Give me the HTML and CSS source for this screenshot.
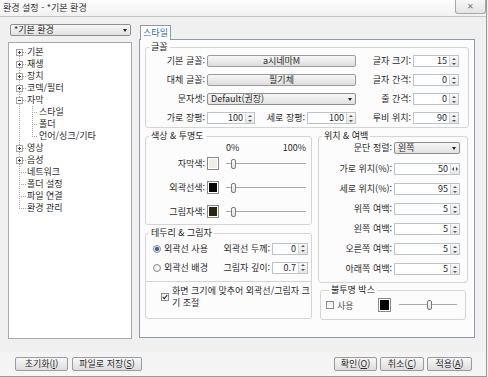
FILE: index.html
```html
<!DOCTYPE html>
<html lang="ko">

<head>
    <meta charset="UTF-8">
    <meta name="viewport" content="width=device-width, initial-scale=1.0">
    <link rel="stylesheet" href="styles.css">
    <title>환경 설정</title>
</head>

<body>
    <div class="window">
        <div class="titlebar">
            <span class="title">환경 설정 - *기본 환경</span>
            <span class="close">✕</span>
        </div>

        <div class="main">
            <div class="sidebar">
                <div class="combo preset">*기본 환경</div>
                <ul class="tree">
                    <li class="node first"><span class="exp plus"></span>기본</li>
                    <li class="node"><span class="exp plus"></span>재생</li>
                    <li class="node"><span class="exp plus"></span>장치</li>
                    <li class="node"><span class="exp plus"></span>코덱/필터</li>
                    <li class="node"><span class="exp minus"></span>자막</li>
                    <li class="node child">스타일</li>
                    <li class="node child">폴더</li>
                    <li class="node child last">언어/싱크/기타</li>
                    <li class="node"><span class="exp plus"></span>영상</li>
                    <li class="node"><span class="exp plus"></span>음성</li>
                    <li class="node">네트워크</li>
                    <li class="node">폴더 설정</li>
                    <li class="node">파일 연결</li>
                    <li class="node last">환경 관리</li>
                </ul>
            </div>

            <div class="tabs">
                <div class="tabbar">
                    <span class="tab">스타일</span>
                </div>
                <div class="panel">
                    <fieldset class="group">
                        <legend>글꼴</legend>
                        <div class="font-grid">
                            <span class="lbl">기본 글꼴:</span>
                            <span class="btn">a시네마M</span>
                            <span class="lbl">글자 크기:</span>
                            <span class="spin"><span class="val">15</span><span class="arrows"><span class="up"></span><span class="down"></span></span></span>

                            <span class="lbl">대체 글꼴:</span>
                            <span class="btn">필기체</span>
                            <span class="lbl">글자 간격:</span>
                            <span class="spin"><span class="val">0</span><span class="arrows"><span class="up"></span><span class="down"></span></span></span>

                            <span class="lbl">문자셋:</span>
                            <span class="combo">Default(권장)</span>
                            <span class="lbl">줄 간격:</span>
                            <span class="spin"><span class="val">0</span><span class="arrows"><span class="up"></span><span class="down"></span></span></span>

                            <span class="lbl">가로 장평:</span>
                            <span class="ratio">
                                <span class="spin w48"><span class="val">100</span><span class="arrows"><span class="up"></span><span class="down"></span></span></span>
                                <span class="lbl grow">세로 장평:</span>
                                <span class="spin w49"><span class="val">100</span><span class="arrows"><span class="up"></span><span class="down"></span></span></span>
                            </span>
                            <span class="lbl">루비 위치:</span>
                            <span class="spin"><span class="val">90</span><span class="arrows"><span class="up"></span><span class="down"></span></span></span>
                        </div>
                    </fieldset>

                    <div class="cols">
                        <div class="col left">
                            <fieldset class="group color">
                                <legend>색상 &amp; 투명도</legend>
                                <div class="scale"><span>0%</span><span>100%</span></div>
                                <div class="color-grid">
                                    <span class="lbl">자막색:</span>
                                    <span class="swatch" style="background:#efede6"></span>
                                    <span class="slider"><span class="thumb"></span></span>

                                    <span class="lbl">외곽선색:</span>
                                    <span class="swatch" style="background:#050505"></span>
                                    <span class="slider"><span class="thumb"></span></span>

                                    <span class="lbl">그림자색:</span>
                                    <span class="swatch" style="background:#2b2613"></span>
                                    <span class="slider"><span class="thumb"></span></span>
                                </div>
                            </fieldset>

                            <fieldset class="group outline">
                                <legend>테두리 &amp; 그림자</legend>
                                <div class="outline-grid">
                                    <span class="opt"><span class="radio on"></span>외곽선 사용</span>
                                    <span class="lbl">외곽선 두께:</span>
                                    <span class="spin"><span class="val">0</span><span class="arrows"><span class="up"></span><span class="down"></span></span></span>

                                    <span class="opt"><span class="radio"></span>외곽선 배경</span>
                                    <span class="lbl">그림자 깊이:</span>
                                    <span class="spin"><span class="val">0.7</span><span class="arrows"><span class="up"></span><span class="down"></span></span></span>
                                </div>
                                <div class="sep"></div>
                                <div class="fit">
                                    <span class="check on">
                                        <svg viewBox="0 0 6 6" width="6" height="6"><path d="M0.8 3 L2.4 4.6 L5.2 1.2" fill="none" stroke="#2b2b2b" stroke-width="1.1"/></svg>
                                    </span>
                                    <span>화면 크기에 맞추어 외곽선/그림자 크<br>기 조절</span>
                                </div>
                            </fieldset>
                        </div>

                        <div class="col right">
                            <fieldset class="group pos">
                                <legend>위치 &amp; 여백</legend>
                                <div class="pos-grid">
                                    <span class="lbl">문단 정렬:</span>
                                    <span class="combo">왼쪽</span>

                                    <span class="lbl">가로 위치(%):</span>
                                    <span class="spin"><span class="val">50</span><span class="arrows h"><span class="left"></span><span class="right"></span></span></span>

                                    <span class="lbl">세로 위치(%):</span>
                                    <span class="spin"><span class="val">95</span><span class="arrows"><span class="up"></span><span class="down"></span></span></span>

                                    <span class="lbl">위쪽 여백:</span>
                                    <span class="spin"><span class="val">5</span><span class="arrows"><span class="up"></span><span class="down"></span></span></span>

                                    <span class="lbl">왼쪽 여백:</span>
                                    <span class="spin"><span class="val">5</span><span class="arrows"><span class="up"></span><span class="down"></span></span></span>

                                    <span class="lbl">오른쪽 여백:</span>
                                    <span class="spin"><span class="val">5</span><span class="arrows"><span class="up"></span><span class="down"></span></span></span>

                                    <span class="lbl">아래쪽 여백:</span>
                                    <span class="spin"><span class="val">5</span><span class="arrows"><span class="up"></span><span class="down"></span></span></span>
                                </div>
                            </fieldset>

                            <fieldset class="group box">
                                <legend>불투명 박스</legend>
                                <div class="box-row">
                                    <span class="use"><span class="check"></span>사용</span>
                                    <span class="swatch big" style="background:#050505"></span>
                                    <span class="slider short"><span class="thumb mid"></span></span>
                                </div>
                            </fieldset>
                        </div>
                    </div>
                </div>
            </div>
        </div>

        <div class="footer">
            <span class="btn w53">초기화(<u>I</u>)</span>
            <span class="btn w70">파일로 저장(<u>S</u>)</span>
            <span class="btn w43 push">확인(<u>O</u>)</span>
            <span class="btn w44">취소(<u>C</u>)</span>
            <span class="btn w45">적용(<u>A</u>)</span>
        </div>
    </div>
</body>

</html>
```

FILE: styles.css
```css
* {
    margin: 0;
    padding: 0;
    box-sizing: border-box;
}

html,
body {
    width: 488px;
    height: 377px;
    overflow: hidden;
}

body {
    background: #f0f0f0;
    font-family: "Noto Sans CJK KR", "Noto Sans", sans-serif;
    font-size: 9px;
    color: #2a2a2a;
}

ul {
    list-style: none;
}

.window {
    width: 487px;
    height: 377px;
    border-right: 1px solid #9a9a9a;
    border-bottom: 1px solid #9a9a9a;
    display: flex;
    flex-direction: column;
}

/* title bar */
.titlebar {
    height: 17px;
    flex-shrink: 0;
    padding-left: 3px;
    border-bottom: 1px solid #c4c4c4;
    background: linear-gradient(to bottom, #fcfcfc, #f1f1f1);
    display: flex;
    justify-content: space-between;
    align-items: flex-start;
}

.title {
    line-height: 16px;
    color: #333;
}

.close {
    width: 31px;
    height: 14px;
    border: 1px solid #a8a8a8;
    border-top: none;
    border-radius: 0 0 3px 3px;
    background: linear-gradient(to bottom, #f7f7f7, #e4e4e4);
    color: #777;
    font-size: 8px;
    line-height: 12px;
    text-align: center;
}

/* main area */
.main {
    height: 322px;
    flex-shrink: 0;
    padding: 7px 0 0 8px;
    display: flex;
}

.sidebar {
    width: 124px;
    display: flex;
    flex-direction: column;
    gap: 6px;
}

.combo {
    height: 12px;
    padding-left: 3px;
    border: 1px solid #8e8e8e;
    border-radius: 2px;
    background: linear-gradient(to bottom, #f6f6f6, #e2e2e2);
    display: flex;
    align-items: center;
    line-height: 10px;
    white-space: nowrap;
}

.combo::after {
    content: "";
    margin-left: auto;
    margin-right: 3px;
    border-left: 2.5px solid transparent;
    border-right: 2.5px solid transparent;
    border-top: 3px solid #222;
}

.combo.preset {
    margin: 0 1px 0 2px;
}

/* tree */
.tree {
    flex: 1;
    padding-top: 3px;
    border: 1px solid #a9a9a9;
    background: #fff;
}

.node {
    height: 12px;
    line-height: 12px;
    padding-left: 18px;
    display: flex;
    align-items: center;
    white-space: nowrap;
    background-image:
        repeating-linear-gradient(to bottom, #a4a4a4 0 1px, transparent 1px 2px),
        repeating-linear-gradient(to right, #a4a4a4 0 1px, transparent 1px 2px);
    background-repeat: no-repeat;
    background-position: 10px 0, 10px 6px;
    background-size: 1px 12px, 7px 1px;
}

.node.first {
    background-position: 10px 6px, 10px 6px;
    background-size: 1px 6px, 7px 1px;
}

.node.last {
    background-size: 1px 7px, 7px 1px;
}

.node.child {
    padding-left: 30px;
    background-image:
        repeating-linear-gradient(to bottom, #a4a4a4 0 1px, transparent 1px 2px),
        repeating-linear-gradient(to bottom, #a4a4a4 0 1px, transparent 1px 2px),
        repeating-linear-gradient(to right, #a4a4a4 0 1px, transparent 1px 2px);
    background-position: 10px 0, 23px 0, 23px 6px;
    background-size: 1px 12px, 1px 12px, 6px 1px;
}

.node.child.last {
    background-size: 1px 12px, 1px 7px, 6px 1px;
}

.exp {
    width: 7px;
    height: 7px;
    margin: 0 4px 0 -11px;
    border: 1px solid #a5a5a5;
    background: #fff;
}

.exp.plus {
    background:
        linear-gradient(#444, #444) center / 3px 1px no-repeat,
        linear-gradient(#444, #444) center / 1px 3px no-repeat,
        #fff;
}

.exp.minus {
    background:
        linear-gradient(#444, #444) center / 3px 1px no-repeat,
        #fff;
}

/* tabs */
.tabs {
    width: 336px;
    margin-left: 7px;
    padding-top: 1px;
    display: flex;
    flex-direction: column;
}

.tabbar {
    height: 14px;
    padding-left: 1px;
    display: flex;
}

.tab {
    width: 31px;
    height: 15px;
    border: 1px solid #8e9aa8;
    border-bottom: none;
    background: #fff;
    color: #2f6bb3;
    line-height: 13px;
    text-align: center;
    position: relative;
    z-index: 1;
}

.panel {
    height: 299px;
    padding: 2px 5px 0 5px;
    border: 1px solid #8e9aa8;
    background: #fcfcfc;
}

/* group boxes */
.group {
    min-width: 0;
    border: 1px solid #d5d5d5;
    border-radius: 3px;
}

.group legend {
    margin-left: 3px;
    padding: 0 2px;
    line-height: 10px;
    color: #1a1a1a;
}

.lbl {
    padding-right: 2px;
    line-height: 12px;
    text-align: right;
    white-space: nowrap;
}

.btn {
    border: 1px solid #9c9c9c;
    border-radius: 2px;
    background: linear-gradient(to bottom, #f7f7f7, #dddddd);
    line-height: 10px;
    text-align: center;
    white-space: nowrap;
}

.spin {
    height: 12px;
    border: 1px solid #bcc3cc;
    background: #fff;
    display: flex;
}

.spin .val {
    flex: 1;
    padding-right: 2px;
    line-height: 10px;
    text-align: right;
}

.arrows {
    width: 9px;
    border-left: 1px solid #d4d4d4;
    background: linear-gradient(to bottom, #f9f9f9, #e6e6e6);
    display: flex;
    flex-direction: column;
}

.arrows span {
    flex: 1;
    display: flex;
    align-items: center;
    justify-content: center;
}

.arrows .up::after,
.arrows .down::after,
.arrows .left::after,
.arrows .right::after {
    content: "";
    border: 2px solid transparent;
}

.arrows .up::after {
    border-top: none;
    border-bottom-color: #555;
}

.arrows .down::after {
    border-bottom: none;
    border-top-color: #555;
}

.arrows.h {
    flex-direction: row;
}

.arrows .left::after {
    border-left: none;
    border-right-color: #555;
}

.arrows .right::after {
    border-right: none;
    border-left-color: #555;
}

/* font group */
.font-grid {
    padding: 3px 0 3px 0;
    display: grid;
    grid-template-columns: 61px 149px 57px 46px;
    grid-auto-rows: 12px;
    row-gap: 7px;
}

.ratio {
    display: flex;
}

.ratio .grow {
    flex: 1;
}

.w48 {
    width: 48px;
}

.w49 {
    width: 49px;
}

.cols {
    margin-top: 3px;
    display: flex;
    gap: 6px;
}

.col {
    display: flex;
    flex-direction: column;
}

.col.left {
    width: 167px;
    gap: 3px;
}

.col.right {
    width: 150px;
}

/* colour group */
.color {
    padding-bottom: 6px;
}

.scale {
    width: 80px;
    height: 8px;
    margin: 3px 0 0 80px;
    line-height: 8px;
    display: flex;
    justify-content: space-between;
}

.color-grid {
    margin-top: 5px;
    display: grid;
    grid-template-columns: 61px 19px 80px;
    grid-auto-rows: 13px;
    row-gap: 11px;
    align-items: center;
}

.swatch {
    width: 12px;
    height: 13px;
    border: 1px solid #8a8a8a;
    box-shadow: inset 0 0 0 1px #fff;
}

.swatch.big {
    width: 13px;
    height: 14px;
    margin-right: 8px;
}

.slider {
    height: 12px;
    display: flex;
    align-items: center;
    background: linear-gradient(to bottom, transparent 5px, #a9a9a9 5px 6px, #fff 6px 7px, transparent 7px);
}

.slider.short {
    width: 58px;
}

.thumb {
    width: 5px;
    height: 10px;
    margin-left: 5px;
    border: 1px solid #7a7a7a;
    border-radius: 2px;
    background: linear-gradient(to bottom, #fdfdfd, #e0e0e0);
}

.thumb.mid {
    margin-left: 28px;
}

/* outline group */
.outline {
    padding-bottom: 9px;
}

.outline-grid {
    padding: 4px 3px 0 7px;
    display: grid;
    grid-template-columns: 1fr auto 36px;
    grid-template-rows: 13px 13px;
    row-gap: 6px;
    align-items: center;
}

.opt {
    display: flex;
    align-items: center;
    gap: 3px;
    white-space: nowrap;
}

.radio {
    width: 8px;
    height: 8px;
    border: 1px solid #8b8b8b;
    border-radius: 50%;
    background: radial-gradient(circle, #fff, #e2e2e2);
}

.radio.on {
    background: radial-gradient(circle, #41679a 0 1.8px, #e9eef5 2.4px);
}

.sep {
    height: 1px;
    margin-top: 7px;
    background: #d5d5d5;
}

.fit {
    margin-top: 3px;
    padding-left: 15px;
    line-height: 12px;
    display: flex;
    align-items: center;
    gap: 3px;
}

.check {
    width: 8px;
    height: 8px;
    flex-shrink: 0;
    border: 1px solid #8b8b8b;
    background: linear-gradient(to bottom, #ececec, #fff);
    display: flex;
    align-items: center;
    justify-content: center;
}

/* position group */
.pos-grid {
    padding: 1px 7px 7px 0;
    display: grid;
    grid-template-columns: 1fr 66px;
    grid-template-rows: 13px repeat(6, 12px);
    row-gap: 8px;
}

.box {
    margin: 2px 2px 0;
    padding: 3px 0 7px 5px;
}

.box-row {
    height: 14px;
    display: flex;
    align-items: center;
}

.use {
    width: 52px;
    display: flex;
    align-items: center;
    gap: 3px;
    color: #555;
}

/* footer */
.footer {
    height: 24px;
    margin-top: 13px;
    padding: 5px 14px 5px 15px;
    background: linear-gradient(to bottom, #f3f3f3, #f6f6f6);
    display: flex;
    gap: 4px;
}

.footer .btn {
    line-height: 12px;
}

.footer u {
    text-decoration: underline;
}

.push {
    margin-left: auto;
}

.footer .w43 + .btn,
.footer .w44 + .btn {
    margin-left: -1px;
}

.w53 {
    width: 53px;
}

.w70 {
    width: 70px;
}

.w43 {
    width: 43px;
}

.w44 {
    width: 44px;
}

.w45 {
    width: 45px;
}
```
